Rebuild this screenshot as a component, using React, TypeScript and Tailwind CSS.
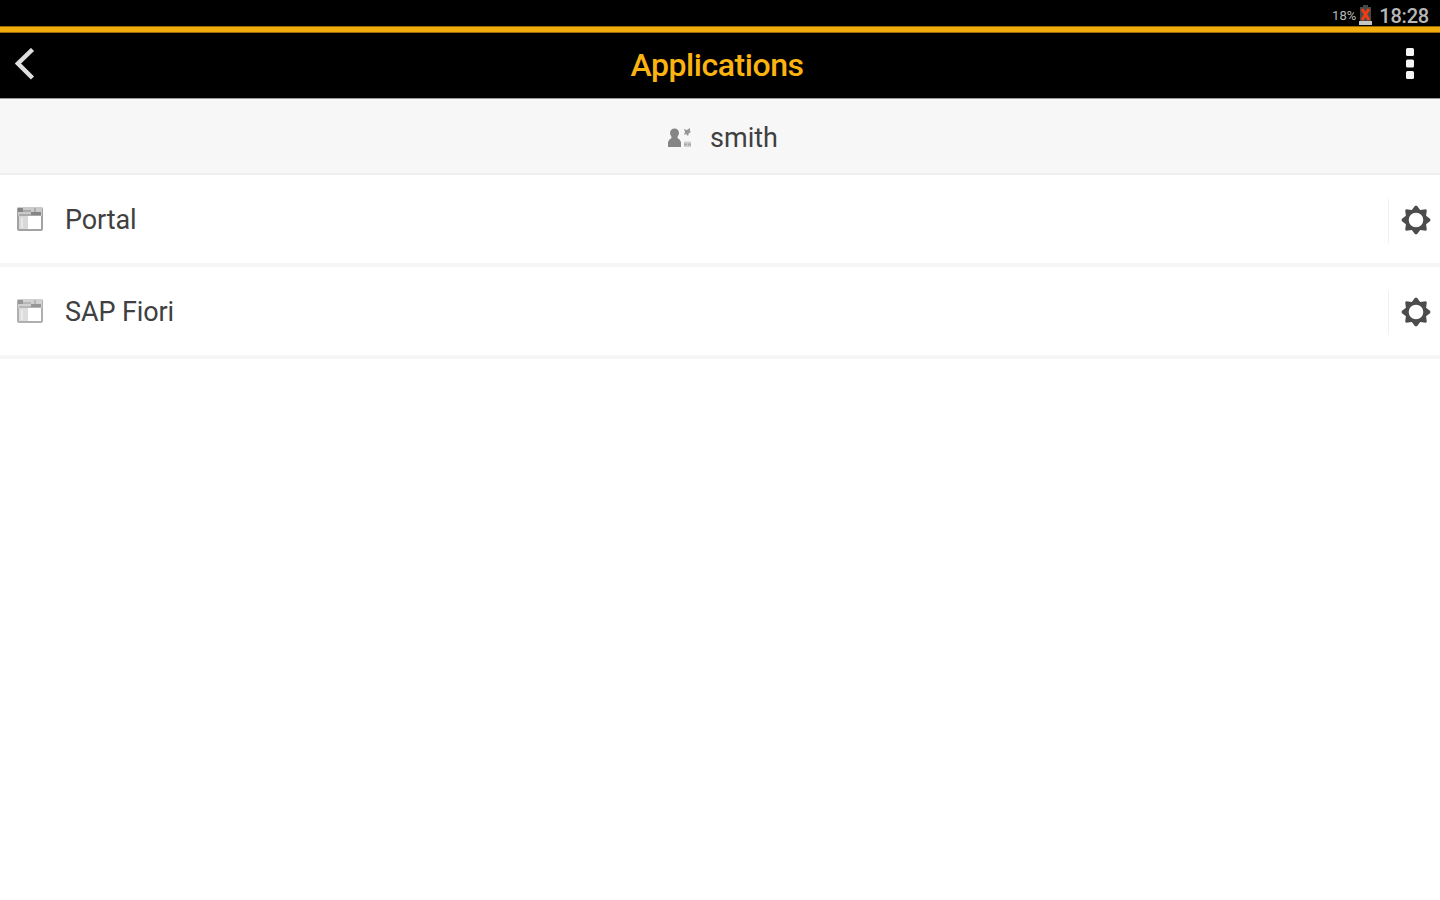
import React from "react";

function Gear() {
  return (
    <svg className="h-[30px] w-[30px]" viewBox="-15 -15 30 30" aria-hidden="true">
      <path
        fill="#4c4c4c"
        fillRule="evenodd"
        d="M-1-14.3h2L4.2-10.1l5.6-.7 1 1-.7 5.6L14.3-1v2L10.1 4.2l.7 5.6-1 1-5.6-.7L1 14.3h-2L-4.2 10.1l-5.6.7-1-1 .7-5.6L-14.3 1v-2L-10.1-4.2l-.7-5.6 1-1 5.6.7ZM0-7.3A7.3 7.3 0 1 0 0 7.3 7.3 7.3 0 1 0 0-7.3Z"
      />
    </svg>
  );
}

function AppWindow({ light }: { light: boolean }) {
  return (
    <svg className={light ? "h-6 w-[26px] shrink-0 opacity-85" : "h-6 w-[26px] shrink-0"} viewBox="0 0 26 24" aria-hidden="true">
      <rect x="1" y="1" width="24" height="22" rx="1" fill="#fff" stroke="#a2a2a2" strokeWidth="2" />
      <path fill="#cacaca" d="M1 0h24v9H1z" />
      <path fill="#858585" d="M1 1h5v4H1zM14 5h10v3.500H14z" />
      <path fill="#aaa" d="M6 3h8v2H6zM2 7h12v2H2zM17 1h2v4h-2z" />
      <path fill="#d8d8d8" d="M2 9h9v13H2z" />
      <path fill="#e8e8e8" d="M4 11h2v10H4z" />
    </svg>
  );
}

function UserIcon() {
  return (
    <svg className="h-6 w-[26px] shrink-0" viewBox="0 0 26 24" aria-hidden="true">
      <g fill="#858585">
        <circle cx="7.5" cy="7" r="4.500" />
        <path d="M4.500 10h6v2l2 1.500 1.500 2.500v5H1v-5l1.500-2.500 2-1.500z" />
      </g>
      <path fill="#979797" d="m17 3 3 1 3-2v3l1 1-2 1-1 3-2-2-2 1 1-3z" />
      <path fill="#cfcfcf" d="M17 15.500h7V21h-7z" />
      <path fill="#aaa" d="M17 17.500h3v2h-3zM21 17.500h3v2h-3z" />
    </svg>
  );
}

function Row({ name, light }: { name: string; light: boolean }) {
  return (
    <li className="flex h-[92px] items-center border-b-4 border-[#f6f6f6] pl-[17px]">
      <AppWindow light={light} />
      <span className="ml-[22px] grow whitespace-nowrap pt-0.5 text-[27px] leading-9 tracking-[-0.1px] text-[#404040]">{name}</span>
      <button aria-label={`${name} settings`} className="mt-[3px] flex h-11 w-[52px] items-center border-l border-[#f0f0f0] pb-0.5 pl-3">
        <Gear />
      </button>
    </li>
  );
}

export default function App() {
  return (
    <div className="h-[900px] w-[1440px] overflow-hidden bg-white font-['Roboto',sans-serif]">
      <div className="flex h-[26px] items-center justify-end bg-black pr-[11px] pt-[5px] text-[#b8b8b8]">
        <span className="text-[13px] leading-4">18%</span>
        <svg className="ml-[3px] h-[21px] w-[13px]" viewBox="0 0 13 21" aria-hidden="true">
          <path fill="#454b48" d="M4 0h5v2h3v14H1V2h3z" />
          <path fill="#c5c5c5" d="M0 16h13v4H0z" />
          <path stroke="#f13b13" strokeWidth="3" d="m3 4 7 11M10 4 3 15" />
        </svg>
        <span className="ml-[7px] text-[20px] font-medium leading-5 tracking-[-0.2px]">18:28</span>
      </div>
      <div className="h-[7px] border-y border-[#9a6b08] bg-[#f0ad0c]" />
      <header className="flex h-[65px] items-center justify-between bg-black pb-[3px] pl-[15px] pr-[21px]">
        <button aria-label="Back" className="w-[60px]">
          <svg className="h-8 w-5" viewBox="0 0 20 32" fill="none" aria-hidden="true">
            <path d="M17.500 1.500 3 15.500 17.500 30" stroke="#dedede" strokeWidth="4.500" />
          </svg>
        </button>
        <h1 className="pt-px text-[32px] font-medium leading-10 tracking-[-0.45px] text-[#fbb310]">Applications</h1>
        <button aria-label="More options" className="flex w-[60px] justify-end pr-[5px]">
          <svg className="h-8 w-2" viewBox="0 0 8 32" fill="#f5f5f5" aria-hidden="true">
            <rect y="0" width="8" height="8" rx="1.500" />
            <rect y="11.500" width="8" height="8" rx="1.500" />
            <rect y="23" width="8" height="8" rx="1.500" />
          </svg>
        </button>
      </header>
      <div className="flex h-[77px] items-center justify-center border-b-2 border-t border-b-[#efefef] border-t-[#999] bg-[#f7f7f7] pl-[5px] pt-[3px]">
        <UserIcon />
        <span className="ml-[17px] text-[27px] leading-9 text-[#404040]">smith</span>
      </div>
      <ul>
        <Row name="Portal" light={false} />
        <Row name="SAP Fiori" light />
      </ul>
    </div>
  );
}
